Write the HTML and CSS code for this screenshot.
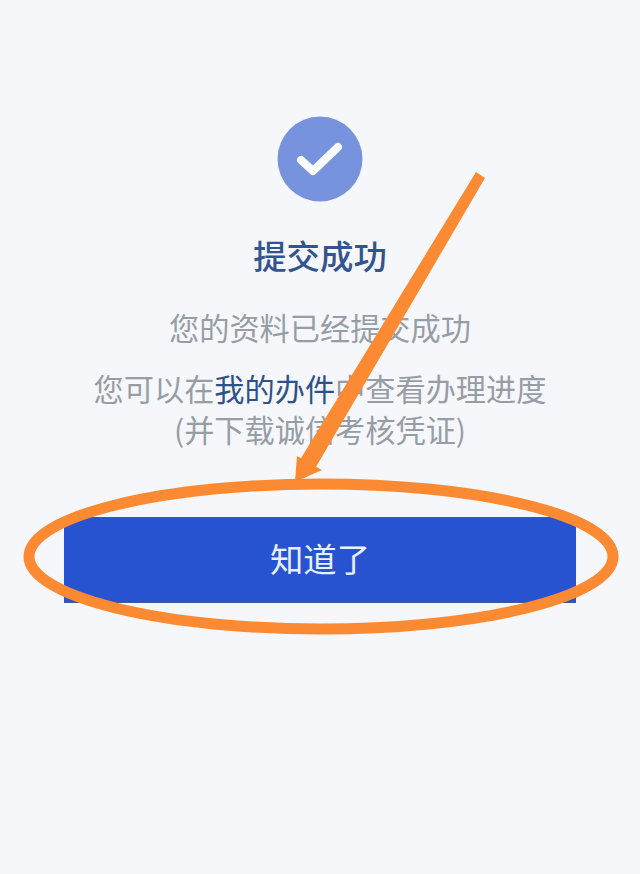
FILE: index.html
```html
<!DOCTYPE html>
<html lang="zh-CN">
<head>
<meta charset="utf-8">
<title>提交成功</title>
<link rel="stylesheet" href="styles.css">
</head>
<body>
<main class="page">
  <svg class="check" viewBox="0 0 86 86" aria-hidden="true">
    <circle cx="43" cy="43" r="42.5" fill="#7893dd"/>
    <path d="M24 44 L36 55 L61 31" fill="none" stroke="#fafbfe" stroke-width="8" stroke-linecap="round" stroke-linejoin="round"/>
  </svg>
  <h1 class="title">提交成功</h1>
  <p class="line first">您的资料已经提交成功</p>
  <p class="line second">您可以在<span class="link">我的办件</span>中查看办理进度</p>
  <p class="line third">(并下载诚信考核凭证)</p>
  <button class="ok" type="button">知道了</button>
  <svg class="marks" viewBox="0 0 640 874" aria-hidden="true">
    <ellipse cx="321" cy="556.5" rx="292" ry="72.5" fill="none" stroke="#fb8a33" stroke-width="11"/>
    <path d="M476 172 L485 178 L313 472 L298 463 Z" fill="#fb8a33"/>
    <path d="M295 482 L297 456 L322 470 Z" fill="#fb8a33"/>
  </svg>
</main>
</body>
</html>
```
FILE: styles.css
```css
* { box-sizing: border-box; }
html, body { margin: 0; padding: 0; }
body {
  background: #f5f7fa;
  font-family: "Noto Sans CJK SC", "Liberation Sans", sans-serif;
}
.page {
  position: relative;
  width: 640px;
  height: 874px;
  overflow: hidden;
  display: flex;
  flex-direction: column;
  align-items: center;
  padding-top: 116px;
  background: #f5f7fa;
}
.check { display: block; width: 86px; height: 86px; }
.title {
  margin: 29px 0 0;
  font-size: 33.4px;
  line-height: 48px;
  font-weight: 500;
  color: #33548f;
}
.line {
  margin: 0;
  font-size: 30.2px;
  line-height: 42px;
  font-weight: 400;
  color: #979da5;
  white-space: nowrap;
}
.first { margin-top: 27px; }
.second { margin-top: 19px; }
.third { margin-top: -1px; }
.link { color: #2f5088; }
.ok {
  margin-top: 67px;
  width: 512px;
  height: 86px;
  flex: none;
  border: 0;
  border-top: 1px solid #3d5a9e;
  border-bottom: 1px solid #3d5a9e;
  border-radius: 0;
  background: #2753d0;
  color: #e8f0fa;
  font-family: inherit;
  font-size: 33.4px;
  padding: 0 0 6px;
}
.marks { position: absolute; left: 0; top: 0; width: 640px; height: 874px; }
```
